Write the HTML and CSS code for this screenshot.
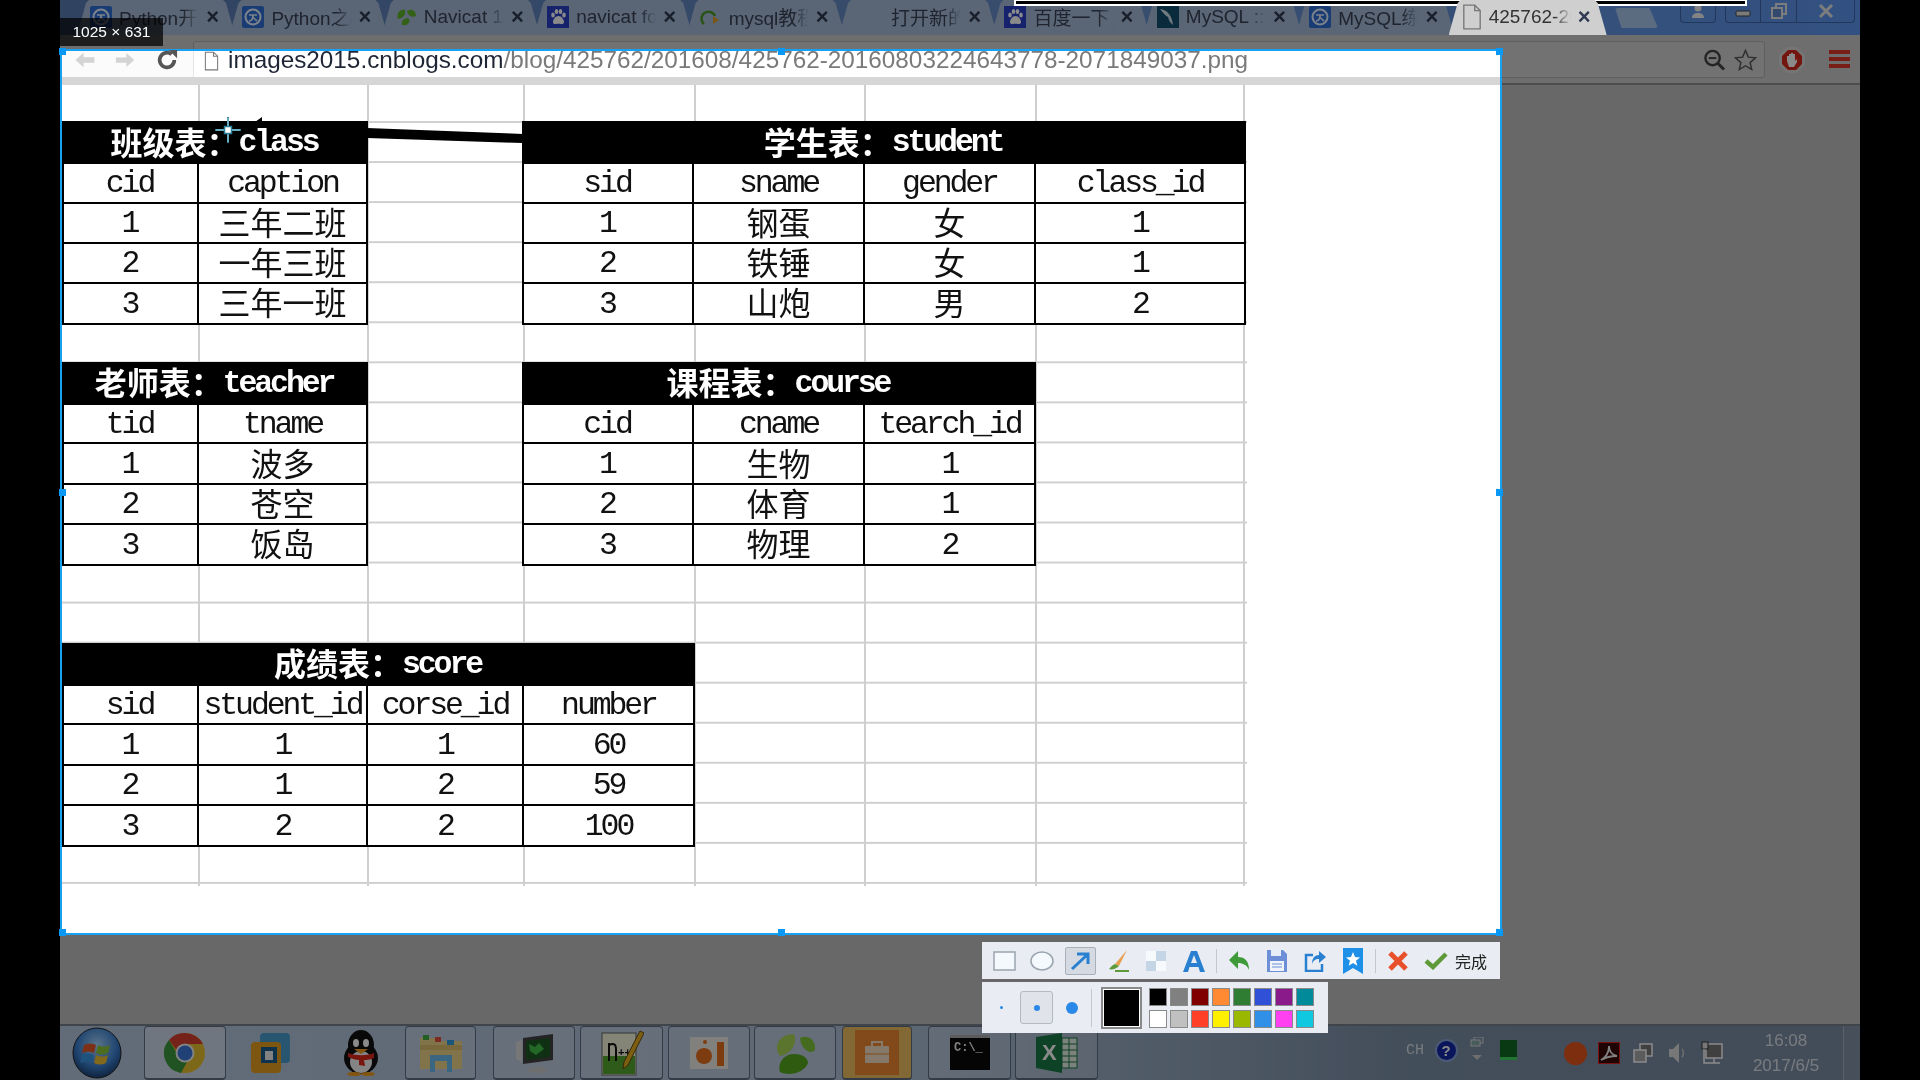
FILE: index.html
```html
<!DOCTYPE html>
<html lang="zh">
<head>
<meta charset="utf-8">
<title>截图</title>
<link rel="stylesheet" href="styles.css">
</head>
<body>
<svg class="defs" width="0" height="0">
  <defs>
    <symbol id="py" viewBox="0 0 22 22"><rect width="22" height="22" rx="2" fill="#2f6fd8"/><circle cx="11" cy="11" r="7.500" fill="none" stroke="#e8f2ff" stroke-width="2"/><path d="M7 9h8M11 9c0 4-2 6-4 6M11 11c1 2 3 3 4 4" fill="none" stroke="#e8f2ff" stroke-width="1.600"/></symbol>
    <symbol id="paw" viewBox="0 0 22 22"><rect width="22" height="22" fill="#2a3fc8"/><ellipse cx="6" cy="9" rx="1.800" ry="2.600" fill="#fff"/><ellipse cx="9.500" cy="5.500" rx="1.800" ry="2.600" fill="#fff"/><ellipse cx="13.500" cy="5.500" rx="1.800" ry="2.600" fill="#fff"/><ellipse cx="17" cy="9" rx="1.800" ry="2.600" fill="#fff"/><path d="M11.500 10c-3 0-5 3-5.500 5.500-.3 2 1.500 3 3 2.500 1.500-.4 3.500-.4 5 0 1.500.5 3.300-.5 3-2.500C16.500 13 14.500 10 11.500 10z" fill="#fff"/></symbol>
    <symbol id="page" viewBox="0 0 22 28"><path d="M2 1h12l6 6v20H2z" fill="none" stroke="#777" stroke-width="1.500"/><path d="M14 1v6h6" fill="none" stroke="#777" stroke-width="1.500"/></symbol>
  </defs>
</svg>

<main class="screen">
  <div class="desktop">

    <header class="tabstrip">
      <div class="tabs">
        <div class="tab"><svg class="tab-ic"><use href="#py"/></svg><span class="title">Python开发</span><span class="x">×</span></div>
        <div class="tab"><svg class="tab-ic"><use href="#py"/></svg><span class="title">Python之路</span><span class="x">×</span></div>
        <div class="tab"><svg class="tab-ic" viewBox="0 0 22 22"><path d="M3 13C1 7 5 3 10 4c1 4-1 8-7 9zM12 5c5-3 9 0 9 5-4 2-8 0-9-5zM7 19c-1-4 2-7 6-7 3 3 1 8-6 7z" fill="#5fb52a"/></svg><span class="title">Navicat 11</span><span class="x">×</span></div>
        <div class="tab"><svg class="tab-ic"><use href="#paw"/></svg><span class="title">navicat for</span><span class="x">×</span></div>
        <div class="tab"><svg class="tab-ic" viewBox="0 0 22 22"><path d="M4 18a7 7 0 1 1 11-8" fill="none" stroke="#4f9a2a" stroke-width="2.500"/><path d="M13 10l6 4-6 4z" fill="#e0a030"/></svg><span class="title">mysql教程</span><span class="x">×</span></div>
        <div class="tab tab-plain"><span class="title">打开新的标签页</span><span class="x">×</span></div>
        <div class="tab"><svg class="tab-ic"><use href="#paw"/></svg><span class="title">百度一下，</span><span class="x">×</span></div>
        <div class="tab"><svg class="tab-ic" viewBox="0 0 22 22"><rect width="22" height="22" fill="#14506e"/><path d="M3 3c7 1 12 6 13 16-3-2-4-5-5-8-2-1-5-4-8-8z" fill="#cfe3ee"/></svg><span class="title">MySQL ::</span><span class="x">×</span></div>
        <div class="tab"><svg class="tab-ic"><use href="#py"/></svg><span class="title">MySQL练习</span><span class="x">×</span></div>
        <div class="tab tab-active"><svg class="tab-ic"><use href="#page"/></svg><span class="title">425762-20</span><span class="x">×</span></div>
      </div>
      <div class="newtab"></div>
      <div class="winctl">
        <div class="wbtn wuser"><svg width="16" height="16" viewBox="0 0 16 16"><circle cx="8" cy="5" r="3.500" fill="#f2f2f2"/><path d="M2 15c0-4 3-5 6-5s6 1 6 5z" fill="#f2f2f2"/></svg></div>
        <div class="wbtn wmin"><svg width="16" height="16" viewBox="0 0 16 16"><rect x="1" y="8" width="14" height="5" rx="1" fill="#e4e4e4" stroke="#444"/></svg></div>
        <div class="wbtn wmax"><svg width="18" height="18" viewBox="0 0 18 18"><rect x="6" y="2" width="10" height="10" fill="none" stroke="#e8e8e8" stroke-width="2"/><rect x="2" y="6" width="10" height="10" fill="#5d85ca" stroke="#e8e8e8" stroke-width="2"/></svg></div>
        <div class="wbtn wclose"><svg width="20" height="16" viewBox="0 0 20 16"><path d="M4 2l12 12M16 2L4 14" stroke="#e8e8e8" stroke-width="3"/></svg></div>
      </div>
    </header>

    <div class="toolbar">
      <div class="omnibox">
        <svg class="ob-ic" viewBox="0 0 24 24"><circle cx="10" cy="10" r="7.500" fill="none" stroke="#444" stroke-width="2.500"/><path d="M6 10h8" stroke="#444" stroke-width="2"/><path d="M15 15l7 7" stroke="#444" stroke-width="3"/></svg>
        <svg class="ob-ic" viewBox="0 0 24 24"><path d="M12 2l3 7 7.500.7-5.700 5 1.700 7.300L12 18l-6.500 4 1.700-7.300-5.700-5L9 9z" fill="none" stroke="#555" stroke-width="1.500"/></svg>
      </div>
      <svg class="stop" viewBox="0 0 28 28"><path d="M9 1h10l8 8v10l-8 8H9l-8-8V9z" fill="#d8d8d8"/><path d="M10 4h8l6 6v8l-6 6h-8l-6-6v-8z" fill="#d42a1c"/><path d="M9 15v-5h2v3-5h2v5-6h2v6-5h2v7l2-2v3l-3 5h-5z" fill="#fff"/></svg>
      <div class="menu"><i></i><i></i><i></i></div>
    </div>

    <div class="content"></div>

    <footer class="taskbar">
      <div class="slot s-start"><svg width="50" height="52" viewBox="0 0 50 52"><defs><radialGradient id="orb" cx=".5" cy=".35" r=".7"><stop offset="0" stop-color="#a8d8ff"/><stop offset=".6" stop-color="#3a7fd0"/><stop offset="1" stop-color="#16355e"/></radialGradient></defs><ellipse cx="25" cy="26" rx="24" ry="25" fill="url(#orb)" stroke="#222"/><path d="M12 18c4-2 8-2 12 0l-2 8c-4-2-8-2-12 0z" fill="#e85a2a"/><path d="M26 18c4 2 8 2 12 0l-2 8c-4 2-8 2-12 0z" fill="#8cc83a"/><path d="M10 28c4-2 8-2 12 0l-2 8c-4-2-8-2-12 0z" fill="#3a9ae8"/><path d="M24 28c4 2 8 2 12 0l-2 8c-4 2-8 2-12 0z" fill="#f0c030"/></svg></div>
      <div class="slot btn s-chrome lit"><svg width="42" height="42" viewBox="0 0 42 42"><circle cx="21" cy="21" r="20" fill="#e8c030"/><path d="M21 1a20 20 0 0 1 18 11H21a9 9 0 0 0-8.500 6L5 8A20 20 0 0 1 21 1z" fill="#d84030"/><path d="M5 8l9 15a9 9 0 0 0 9 7l-6 11A20 20 0 0 1 5 8z" fill="#3d9a40"/><circle cx="21" cy="21" r="9.500" fill="#f0f0f0"/><circle cx="21" cy="21" r="7.500" fill="#3a78d8"/></svg></div>
      <div class="slot s-vm"><svg width="42" height="42" viewBox="0 0 42 42"><rect x="10" y="1" width="30" height="30" rx="4" fill="#4aa0d0"/><rect x="1" y="10" width="30" height="31" rx="4" fill="#e8a020"/><rect x="11" y="15" width="16" height="16" fill="#1d5f8e"/><rect x="15" y="19" width="8" height="9" fill="#f0f0f0"/></svg></div>
      <div class="slot s-qq"><svg width="38" height="46" viewBox="0 0 38 46"><ellipse cx="19" cy="28" rx="17" ry="16" fill="#111"/><ellipse cx="19" cy="15" rx="13" ry="15" fill="#111"/><ellipse cx="19" cy="32" rx="11" ry="11" fill="#f4f4f4"/><ellipse cx="14" cy="13" rx="3" ry="4" fill="#fff"/><ellipse cx="24" cy="13" rx="3" ry="4" fill="#fff"/><path d="M12 19h14l-7 5z" fill="#f0a020"/><path d="M6 23c8 3 18 3 26 0v5c-5 2-8 2-10 2l1 6-6-1v-5c-4 0-8-2-11-3z" fill="#e0281c"/><ellipse cx="12" cy="44" rx="7" ry="2" fill="#f0a020"/><ellipse cx="26" cy="44" rx="7" ry="2" fill="#f0a020"/></svg></div>
      <div class="slot btn s-folder"><svg width="46" height="40" viewBox="0 0 46 40"><path d="M2 5h16l3 3h23v28H2z" fill="#f0d68a"/><rect x="5" y="2" width="6" height="5" fill="#40b040"/><rect x="17" y="4" width="6" height="5" fill="#e85040"/><rect x="29" y="7" width="7" height="5" fill="#30a0e0"/><rect x="2" y="12" width="42" height="5" fill="#e0c070"/><path d="M12 22h22v17h-5v-11H17v11h-5z" fill="#6cbcf0"/></svg></div>
      <div class="slot btn s-mon"><svg width="42" height="42" viewBox="0 0 42 42"><path d="M3 10l6-2v22l-6-3z" fill="#dcdcdc"/><path d="M10 6l30-4v26l-30 4z" fill="#444"/><path d="M13 9l24-3v19l-24 3z" fill="#1d5a22"/><path d="M16 12l6 3 4-4 5 6-8 6-6-4z" fill="#43c048"/><ellipse cx="24" cy="38" rx="10" ry="3" fill="#ccc"/></svg></div>
      <div class="slot btn s-npp"><svg width="44" height="46" viewBox="0 0 44 46"><rect x="2" y="3" width="34" height="42" fill="#f4f4dc" stroke="#666"/><rect x="3" y="26" width="32" height="18" fill="#58a830"/><path d="M9 13v18M9 15c6-3 7 1 7 4v12" fill="none" stroke="#111" stroke-width="2"/><text class="npp-t" x="18" y="26">++</text><path d="M40 1l4 2-16 32-5 4 1-7z" fill="#e8b020" stroke="#6a4a10"/></svg></div>
      <div class="slot btn s-ora"><svg width="40" height="34" viewBox="0 0 40 34"><rect x="1" y="1" width="38" height="32" fill="#f0ece6"/><circle cx="15" cy="20" r="8" fill="#e8701c"/><circle cx="16" cy="6" r="2" fill="#e8701c"/><rect x="28" y="6" width="7" height="24" fill="#e8701c"/></svg></div>
      <div class="slot btn s-nav"><svg width="46" height="42" viewBox="0 0 46 42"><path d="M8 24C0 14 8 2 22 2c4 8-2 20-14 22z" fill="#a8d858"/><path d="M28 6c8-4 16 2 15 12-4 5-14 0-15-12z" fill="#80c838"/><path d="M8 40c-3-9 4-18 14-18s14 5 14 9c-3 9-18 14-28 9z" fill="#58a820"/></svg></div>
      <div class="slot btn s-bag"><svg width="44" height="45" viewBox="0 0 44 45"><rect width="44" height="45" fill="#f08a30"/><rect x="10" y="16" width="24" height="17" rx="1" fill="#f6e0c8"/><path d="M17 16v-4h10v4" fill="none" stroke="#f6e0c8" stroke-width="2"/><path d="M10 24h24" stroke="#f08a30"/></svg></div>
      <div class="slot btn s-cmd"><svg width="40" height="35" viewBox="0 0 40 35"><rect width="40" height="35" fill="#0a0a0a"/><rect width="40" height="3" fill="#aaa"/><text class="cmd-t" x="4" y="16">C:\_</text></svg></div>
      <div class="slot btn s-xls"><svg width="42" height="40" viewBox="0 0 42 40"><path d="M0 4L26 0v40L0 35z" fill="#1b7a46"/><rect x="26" y="5" width="15" height="30" fill="#e6f0e8" stroke="#1b7a46"/><path d="M26 11h15M26 17h15M26 23h15M26 29h15M33 5v30" stroke="#1b7a46"/><text class="xls-t" x="6" y="27">X</text></svg></div>
      <div class="tray">
        <div class="ti ti-ch">CH</div>
        <div class="ti ti-help"><span class="help">?</span></div>
        <div class="ti ti-up"><svg width="14" height="26" viewBox="0 0 14 26"><rect x="4" y="0" width="9" height="6" fill="none" stroke="#ddd"/><rect x="1" y="3" width="9" height="6" fill="#8aa" stroke="#ddd"/><path d="M2 18h10l-5 5z" fill="#ccc"/></svg></div>
        <div class="ti ti-grn"><svg width="17" height="20" viewBox="0 0 17 20"><rect width="17" height="20" fill="#0f6a22"/><rect y="17" width="17" height="3" fill="#40d860"/></svg></div>
        <div class="ti ti-ball"><span class="ball"></span></div>
        <div class="ti ti-pdf"><svg width="22" height="22" viewBox="0 0 22 22"><rect width="22" height="22" fill="#3a0808" stroke="#e02020" stroke-width="2"/><path d="M3 18c5-3 8-8 8-14 0 5 3 9 8 10-6 0-11 1-16 4z" fill="none" stroke="#eee" stroke-width="1.800"/></svg></div>
        <div class="ti ti-win"><svg width="20" height="20" viewBox="0 0 20 20"><rect x="7" y="1" width="12" height="12" fill="#777" stroke="#fff" stroke-width="1.500"/><rect x="1" y="7" width="12" height="12" fill="#aaa" stroke="#fff" stroke-width="1.500"/></svg></div>
        <div class="ti ti-vol"><svg width="18" height="22" viewBox="0 0 18 22"><path d="M1 7h4l6-6v20l-6-6H1z" fill="#ddd"/><path d="M14 7c2 2 2 6 0 8" fill="none" stroke="#ccc" stroke-width="1.500"/></svg></div>
        <div class="ti ti-net"><svg width="22" height="24" viewBox="0 0 22 24"><rect x="5" y="3" width="16" height="14" fill="#777" stroke="#fff" stroke-width="1.500"/><rect x="1" y="1" width="6" height="7" fill="#ddd" stroke="#333"/><path d="M3 8v14h16M13 17v5" fill="none" stroke="#fff" stroke-width="1.500"/></svg></div>
        <div class="clock"><div>16:08</div><div>2017/6/5</div></div>
        <div class="showdesk"></div>
      </div>
    </footer>

    <div class="dim"></div>

    <div class="topline"><i></i></div>

    <section class="capture">
      <span class="size">1025 × 631</span>
      <i class="hd hd-tl"></i><i class="hd hd-tm"></i><i class="hd hd-tr"></i><i class="hd hd-ml"></i><i class="hd hd-mr"></i><i class="hd hd-bl"></i><i class="hd hd-bm"></i><i class="hd hd-br"></i>

      <div class="urlbar">
        <svg class="nav nav-b" viewBox="0 0 24 20"><path d="M2 10l9-8v5h12v6H11v5z" fill="#d4d4d4"/></svg>
        <svg class="nav nav-f" viewBox="0 0 24 20"><path d="M22 10l-9-8v5H1v6h12v5z" fill="#d4d4d4"/></svg>
        <svg class="nav nav-r" viewBox="0 0 24 24"><path d="M20 12a8 8 0 1 1-3-6.200" fill="none" stroke="#555" stroke-width="4"/><path d="M14 1h9v9z" fill="#555"/></svg>
        <div class="addr">
          <svg class="addr-ic"><use href="#page"/></svg>
          <span class="url">images2015.cnblogs.com<span class="url-rest">/blog/425762/201608/425762-20160803224643778-2071849037.png</span></span>
        </div>
      </div>

      <div class="sheet">
        <div class="cells">
          <div class="t t-class">
            <div class="c h"><span class="zh">班级表：</span>class</div>
            <div class="c">cid</div><div class="c">caption</div>
            <div class="c">1</div><div class="c zh">三年二班</div>
            <div class="c">2</div><div class="c zh">一年三班</div>
            <div class="c">3</div><div class="c zh">三年一班</div>
          </div>
          <div class="t t-student">
            <div class="c h"><span class="zh">学生表：</span>student</div>
            <div class="c">sid</div><div class="c">sname</div><div class="c">gender</div><div class="c">class_id</div>
            <div class="c">1</div><div class="c zh">钢蛋</div><div class="c zh">女</div><div class="c">1</div>
            <div class="c">2</div><div class="c zh">铁锤</div><div class="c zh">女</div><div class="c">1</div>
            <div class="c">3</div><div class="c zh">山炮</div><div class="c zh">男</div><div class="c">2</div>
          </div>
          <div class="t t-teacher">
            <div class="c h"><span class="zh">老师表：</span>teacher</div>
            <div class="c">tid</div><div class="c">tname</div>
            <div class="c">1</div><div class="c zh">波多</div>
            <div class="c">2</div><div class="c zh">苍空</div>
            <div class="c">3</div><div class="c zh">饭岛</div>
          </div>
          <div class="t t-course">
            <div class="c h"><span class="zh">课程表：</span>course</div>
            <div class="c">cid</div><div class="c">cname</div><div class="c">tearch_id</div>
            <div class="c">1</div><div class="c zh">生物</div><div class="c">1</div>
            <div class="c">2</div><div class="c zh">体育</div><div class="c">1</div>
            <div class="c">3</div><div class="c zh">物理</div><div class="c">2</div>
          </div>
          <div class="t t-score">
            <div class="c h"><span class="zh">成绩表：</span>score</div>
            <div class="c">sid</div><div class="c">student_id</div><div class="c">corse_id</div><div class="c">number</div>
            <div class="c">1</div><div class="c">1</div><div class="c">1</div><div class="c">60</div>
            <div class="c">2</div><div class="c">1</div><div class="c">2</div><div class="c">59</div>
            <div class="c">3</div><div class="c">2</div><div class="c">2</div><div class="c">100</div>
          </div>
        </div>
        <svg class="arrow" viewBox="0 0 600 60"><path d="M305 43L461 49V58L305 53z" fill="#000"/><path d="M193 37l7-5v5z" fill="#000"/></svg>
        <svg class="cross" viewBox="0 0 26 26"><path d="M13 0v26M0 13h26" stroke="#2a7f9a" stroke-width="2"/><path d="M13 1v24M1 13h24" stroke="#dff" stroke-width=".7"/><rect x="9.500" y="9.500" width="7" height="7" fill="#fff" stroke="#2a7f9a" stroke-width="1.500"/></svg>
      </div>
    </section>

    <div class="anno">
      <div class="anno-row anno-tools">
        <span class="tool"><svg width="23" height="20" viewBox="0 0 23 20"><rect x="1" y="1" width="21" height="18" fill="#f4f9fd" stroke="#9aa4ae" stroke-width="1.500"/></svg></span>
        <span class="tool"><svg width="24" height="20" viewBox="0 0 24 20"><ellipse cx="12" cy="10" rx="11" ry="9" fill="#f4f9fd" stroke="#9aa4ae" stroke-width="1.500"/></svg></span>
        <span class="tool on"><svg width="22" height="20" viewBox="0 0 22 20"><path d="M3 18L18 4M8 3h11v10" fill="none" stroke="#2a80d0" stroke-width="3"/></svg></span>
        <span class="tool"><svg width="22" height="24" viewBox="0 0 22 24"><path d="M20 1L8 15l4 2z" fill="#e8a050"/><path d="M8 15c-3 1-4 3-6 5 3 1 7 0 10-3z" fill="#5f9a3a"/><path d="M8 21h14v2H8z" fill="#5f9a3a"/></svg></span>
        <span class="tool"><svg width="20" height="20" viewBox="0 0 20 20"><rect width="20" height="20" fill="#c4d6e6"/><rect width="10" height="10" fill="#f6fafd"/><rect x="10" y="10" width="10" height="10" fill="#f6fafd"/></svg></span>
        <span class="tool"><svg width="24" height="24" viewBox="0 0 24 24"><path d="M9 2h6l8 21h-5l-1.500-5h-9L6 23H1zM9 14h6l-3-8z" fill="#2a80d0" fill-rule="evenodd"/></svg></span>
        <i class="vsep"></i>
        <span class="tool"><svg width="21" height="22" viewBox="0 0 21 22"><path d="M9 1v6c7 0 11 4 11 13-2-5-6-7-11-7v6L0 10z" fill="#3f9a3a"/></svg></span>
        <span class="tool"><svg width="22" height="24" viewBox="0 0 22 24"><path d="M1 1h16l4 4v18H1z" fill="#6c8fd8"/><rect x="5" y="1" width="10" height="6" fill="#e8eef8"/><rect x="4" y="12" width="14" height="10" fill="#f0f4fa"/><path d="M6 15h10M6 18h10" stroke="#6c8fd8"/></svg></span>
        <span class="tool"><svg width="22" height="22" viewBox="0 0 22 22"><path d="M9 5H2v16h16v-7" fill="none" stroke="#2a80d0" stroke-width="2.500"/><path d="M15 1l7 6-7 6V9c-4 0-6 2-7 5 0-6 3-9 7-9z" fill="#2a80d0"/></svg></span>
        <span class="tool"><svg width="20" height="26" viewBox="0 0 20 26"><path d="M0 0h20v26l-10-6-10 6z" fill="#1e90e8"/><path d="M10 4l2 5 5 .4-4 3.300 1.300 5L10 15l-4.300 2.700 1.300-5-4-3.300L8 9z" fill="#fff"/></svg></span>
        <i class="vsep"></i>
        <span class="tool"><svg width="20" height="20" viewBox="0 0 20 20"><path d="M2 2l16 16M18 2L2 18" stroke="#e8502c" stroke-width="5"/></svg></span>
        <span class="tool"><svg width="24" height="18" viewBox="0 0 24 18"><path d="M2 9l7 6L22 2" fill="none" stroke="#5f9a3a" stroke-width="4.500"/></svg></span>
        <span class="done">完成</span>
      </div>
      <div class="anno-row anno-colors">
        <span class="dotslot"><b class="d d1"></b></span>
        <span class="dotslot sel"><b class="d d2"></b></span>
        <span class="dotslot"><b class="d d3"></b></span>
        <i class="vsep vsep-tall"></i>
        <span class="current"></span>
        <div class="swatches">
          <i class="sw k1"></i><i class="sw k2"></i><i class="sw k3"></i><i class="sw k4"></i><i class="sw k5"></i><i class="sw k6"></i><i class="sw k7"></i><i class="sw k8"></i>
          <i class="sw l1"></i><i class="sw l2"></i><i class="sw l3"></i><i class="sw l4"></i><i class="sw l5"></i><i class="sw l6"></i><i class="sw l7"></i><i class="sw l8"></i>
        </div>
      </div>
    </div>

  </div>
</main>
</body>
</html>
```

FILE: styles.css
```css
* { box-sizing: border-box; }
html, body { margin: 0; background: #000; }
.defs { position: absolute; }

.screen {
  width: 1920px; height: 1080px; padding-left: 60px; overflow: hidden; background: #000;
  font-family: "Liberation Sans", "Noto Sans CJK SC", sans-serif;
  filter: blur(.6px);
}
.desktop { position: relative; width: 1800px; height: 1080px; display: flex; flex-direction: column; background: #c0c0c0; }

/* browser chrome (seen through the dim layer) */
.tabstrip { height: 35px; display: flex; background: linear-gradient(90deg, #5a7cb4, #6a90cc 60%, #5d96f0); padding-left: 17px; }
.tabs { display: flex; }
.tab {
  width: 158px; margin-right: -5.600px; height: 35px; display: flex; align-items: center; padding: 0 16px 2px 13px; gap: 7px;
  background: #a6bcda; color: #3a4356; font-size: 19px;
  clip-path: polygon(0 100%, 9px 3px, 12px 0, calc(100% - 12px) 0, calc(100% - 9px) 3px, 100% 100%);
}
.tab-ic { width: 22px; height: 22px; flex: none; }
.title { flex: 1; overflow: hidden; white-space: nowrap; -webkit-mask-image: linear-gradient(90deg, #000 80%, transparent 100%); mask-image: linear-gradient(90deg, #000 80%, transparent 100%); }
.x { font: bold 22px "Liberation Sans", sans-serif; color: #2f3a50; flex: none; }
.tab-plain { padding-left: 52px; }
.tab-active { background: #cfcfcf; color: #333; z-index: 1; }
.tab-active .tab-ic { height: 28px; width: 20px; }
.newtab { width: 43px; height: 20px; margin: 8px 0 0 14px; background: #a9c7ee; clip-path: polygon(0 0, 80% 0, 100% 100%, 15% 100%); border-radius: 3px; }
.winctl { display: flex; margin-left: auto; margin-right: 5px; align-self: flex-start; height: 23px; }
.wbtn { height: 23px; display: flex; align-items: center; justify-content: center; border: 1px solid #3e66a8; border-top: 0; }
.wuser { width: 36px; margin-right: 9px; border-radius: 0 0 4px 4px; }
.wmin { width: 36px; border-radius: 0 0 0 4px; }
.wmax { width: 36px; border-left: 0; }
.wclose { width: 58px; border-left: 0; border-radius: 0 0 4px 0; }

.toolbar { height: 50px; display: flex; align-items: flex-start; background: #cbcbcb; border-bottom: 2px solid #8f8f8f; padding-top: 6px; padding-left: 133px; }
.omnibox { width: 1572px; height: 37px; display: flex; align-items: center; justify-content: flex-end; gap: 8px; padding-right: 7px; border: 1px solid #b0b0b0; border-radius: 3px; background: #d2d2d2; }
.ob-ic { width: 23px; height: 24px; }
.stop { width: 28px; height: 28px; margin: 5px 0 0 13px; }
.menu { margin: 9px 0 0 23px; width: 21px; display: flex; flex-direction: column; gap: 3px; }
.menu i { height: 4px; background: #e0392a; }

.content { flex: 1; background: #c0c0c0; }

/* taskbar */
.taskbar { height: 56px; display: flex; align-items: stretch; background: linear-gradient(90deg, #b6c8e0 0%, #afc2da 45%, #7d90a8 75%, #7d8ea4 100%); border-top: 2px solid #77808c; }
.slot { display: flex; align-items: center; justify-content: center; flex: none; }
.btn { border: 1px solid #5e6e84; border-bottom-width: 2px; border-radius: 4px; background: rgba(255,255,255,.16); }
.lit { background: rgba(255,255,255,.35); }
.s-start { width: 84px; padding-right: 10px; }
.s-chrome { width: 82px; }
.s-vm { width: 90px; }
.s-qq { width: 89px; }
.s-folder { width: 71px; }
.s-mon { width: 82px; margin-left: 17px; }
.s-npp { width: 83px; margin-left: 5px; }
.s-ora { width: 82px; margin-left: 5px; }
.s-nav { width: 82px; margin-left: 4px; }
.s-bag { width: 70px; margin-left: 6px; background: #f0c060; }
.s-cmd { width: 83px; margin-left: 16px; }
.s-xls { width: 83px; margin-left: 4px; }
.npp-t { font: bold 11px "Liberation Sans", sans-serif; fill: #111; }
.cmd-t { font: bold 12px "Liberation Mono", monospace; fill: #eee; }
.xls-t { font: bold 22px "Liberation Sans", sans-serif; fill: #fff; }

.tray { margin-left: auto; display: flex; align-items: center; color: #dfe4ea; }
.ti { display: flex; align-items: center; justify-content: center; height: 100%; padding-bottom: 6px; flex: none; }
.ti-ch { width: 34px; font: 15px "Liberation Mono", monospace; }
.ti-help { width: 28px; }
.help { width: 23px; height: 23px; border-radius: 50%; background: #1428a8; border: 2px solid #8aa4d8; color: #fff; font: bold 15px/19px "Liberation Sans", sans-serif; text-align: center; }
.ti-up { width: 34px; }
.ti-grn { width: 28px; }
.ti-ball { width: 34px; margin-left: 36px; padding: 0; }
.ball { width: 23px; height: 23px; border-radius: 50%; background: #e8551a; }
.ti-pdf { width: 34px; padding: 0; }
.ti-win { width: 33px; padding: 0; }
.ti-vol { width: 36px; padding: 0; }
.ti-net { width: 34px; padding: 0; }
.clock { width: 114px; text-align: center; font-size: 17px; line-height: 25px; color: #dde3ea; }
.showdesk { width: 17px; height: 100%; background: #8393a8; border-left: 1px solid #aab6c6; }

/* dim layer of the capture tool */
.dim { position: absolute; inset: 0; background: rgba(0,0,0,.46); }

.topline { position: absolute; left: 954px; top: 0; width: 733px; height: 6px; background: #fff; padding: 1px 2px; }
.topline i { display: block; height: 3px; background: #000; }

/* capture selection */
.capture { position: absolute; left: 0; top: 49px; width: 1442px; height: 886px; border: 2px solid #18a0f2; display: flex; flex-direction: column; background: #fff; }
.size { position: absolute; left: -2px; top: -33px; width: 103px; height: 28px; background: rgba(0,0,0,.72); color: #fff; font-size: 15.500px; line-height: 28px; text-align: center; }
.hd { position: absolute; width: 7px; height: 7px; background: #0a98f5; z-index: 2; }
.hd-tl { left: -3px; top: -3px; }
.hd-tm { left: 716px; top: -3px; }
.hd-tr { right: -3px; top: -3px; }
.hd-ml { left: -3px; top: 438px; }
.hd-mr { right: -3px; top: 438px; }
.hd-bl { left: -3px; bottom: -3px; }
.hd-bm { left: 716px; bottom: -3px; }
.hd-br { right: -3px; bottom: -3px; }

.urlbar { height: 34px; flex: none; display: flex; align-items: flex-start; border-bottom: 8px solid #d6d6d6; background: #fbfbfb; position: relative; }
.nav { flex: none; margin-top: 0; }
.nav-b { width: 23px; height: 18px; margin: 0 0 0 11px; }
.nav-f { width: 21px; height: 18px; margin: 0 0 0 19px; }
.nav-r { width: 22px; height: 22px; margin: -2px 0 0 20px; }
.addr { flex: 1; height: 26px; margin-left: 15px; display: flex; align-items: flex-start; gap: 9px; padding-left: 10px; background: #fff; border-left: 1px solid #e6e6e6; }
.addr-ic { width: 15px; height: 20px; flex: none; }
.url { font-size: 24.300px; color: #1e2535; white-space: nowrap; line-height: 18px; }
.url-rest { color: #7a7a7a; }

.sheet { flex: 1; position: relative; background: #fff; overflow: hidden; }
.cells {
  width: 1185px; height: 801px; display: grid; align-content: start;
  grid-template-columns: 136px 169px 156px 171px 170px 171px 210px;
  grid-template-rows: 36px repeat(19, 40.15px);
  background:
    linear-gradient(#cfcfcf, #cfcfcf) 136px 0 / 2px 100% no-repeat,
    linear-gradient(#cfcfcf, #cfcfcf) 305px 0 / 2px 100% no-repeat,
    linear-gradient(#cfcfcf, #cfcfcf) 461px 0 / 2px 100% no-repeat,
    linear-gradient(#cfcfcf, #cfcfcf) 632px 0 / 2px 100% no-repeat,
    linear-gradient(#cfcfcf, #cfcfcf) 802px 0 / 2px 100% no-repeat,
    linear-gradient(#cfcfcf, #cfcfcf) 973px 0 / 2px 100% no-repeat,
    linear-gradient(#cfcfcf, #cfcfcf) 1181px 0 / 2px 100% no-repeat,
    linear-gradient(transparent 38.050px, #cfcfcf 38.050px) 0 38px / 100% 40.05px;
}
.t {
  display: grid; justify-self: start; align-self: start; height: 203.700px; grid-row-end: span 5;
  grid-template-rows: 43px 39.500px 40.400px 40.400px 40.400px;
  background: #fff; box-shadow: inset 2px 0 #000;
  font: 31.500px "Liberation Mono", "Noto Sans CJK SC", monospace; letter-spacing: -3.100px; color: #111;
}
.t-class { grid-column: 1 / span 2; grid-row-start: 2; grid-template-columns: 137px 169px; }
.t-student { grid-column: 4 / span 4; grid-row-start: 2; margin-left: -1px; grid-template-columns: 172px 171px 171px 210px; }
.t-teacher { grid-column: 1 / span 2; grid-row-start: 8; grid-template-columns: 137px 169px; }
.t-course { grid-column: 4 / span 3; grid-row-start: 8; margin-left: -1px; grid-template-columns: 172px 171px 171px; }
.t-score { grid-column: 1 / span 4; grid-row-start: 15; grid-template-columns: 137px 169px 156px 171px; }
.c { display: flex; align-items: center; justify-content: center; padding-top: 2px; border-right: 2px solid #000; border-bottom: 2.500px solid #000; white-space: nowrap; line-height: 1; overflow: hidden; }
.c.zh { font: 32px "Noto Sans CJK SC", sans-serif; letter-spacing: 0; padding: 0 0 4px; }
.h { grid-column: 1 / -1; background: #000; color: #fff; font-weight: bold; border-color: #000; padding-top: 3px; }
.h .zh { font: bold 32px "Noto Sans CJK SC", sans-serif; letter-spacing: 0; margin-bottom: 5px; }

.arrow { position: absolute; left: 0; top: 0; width: 600px; height: 60px; }
.cross { position: absolute; left: 153px; top: 32px; width: 26px; height: 26px; }

/* annotation toolbars */
.anno { position: absolute; left: 922px; top: 942px; display: flex; flex-direction: column; gap: 3px; align-items: flex-start; }
.anno-row { background: #e9edf3; display: flex; align-items: center; }
.anno-tools { width: 518px; height: 37px; padding-left: 3px; }
.tool { width: 38px; height: 28px; display: flex; align-items: center; justify-content: center; flex: none; }
.tool.on { width: 31px; margin: 0 3.500px; background: #d5dae2; border: 1px solid #aab0ba; border-radius: 2px; }
.vsep { width: 1px; height: 24px; margin: 0 3px; background: #c4c8ce; flex: none; }
.done { font-size: 16px; color: #222; white-space: nowrap; }
.anno-colors { width: 346px; height: 51px; padding-left: 3px; }
.dotslot { width: 33px; height: 33px; margin-right: 2px; display: flex; align-items: center; justify-content: center; border: 1px solid transparent; border-radius: 3px; }
.dotslot.sel { background: #e0e3e9; border-color: #b4b8c0; }
.d { display: block; border-radius: 50%; background: #2a88e8; }
.d1 { width: 3px; height: 3px; }
.d2 { width: 6px; height: 6px; }
.d3 { width: 12px; height: 12px; }
.vsep-tall { height: 38px; margin: 0 10px 0 1px; }
.current { width: 39px; height: 40px; background: #000; border: 2px solid #fff; outline: 2px solid #8a8a8a; outline-offset: -1px; flex: none; }
.swatches { display: grid; grid-template-columns: repeat(8, 18px); grid-template-rows: repeat(2, 18px); gap: 4px 3px; margin-left: 8px; }
.sw { display: block; border: 1px solid #8a8a8a; }
.k1 { background: #000; } .k2 { background: #808080; } .k3 { background: #800000; } .k4 { background: #ff8a33; }
.k5 { background: #2e7d32; } .k6 { background: #3050d8; } .k7 { background: #8a1a8a; } .k8 { background: #008a9a; }
.l1 { background: #fff; } .l2 { background: #c0c0c0; } .l3 { background: #ff4028; } .l4 { background: #fff000; }
.l5 { background: #9ab800; } .l6 { background: #3090e8; } .l7 { background: #ff40f0; } .l8 { background: #10c8e0; }
```
